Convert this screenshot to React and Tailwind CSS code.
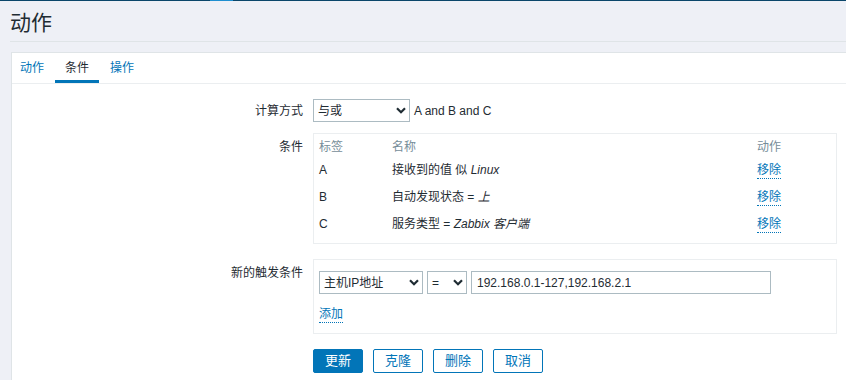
import React from 'react';

const Chevron = () => (
    <svg width="10" height="7" viewBox="0 0 10 7" className="shrink-0">
        <polyline points="1,1.2 5,5.2 9,1.2" fill="none" stroke="#1f2c33" strokeWidth="2.2" />
    </svg>
);

const Select = ({ value, width }) => (
    <div className={`flex items-center justify-between h-[23px] border border-[#acbbc2] bg-white pl-[4px] pr-[3px] ${width}`}>
        <span>{value}</span>
        <Chevron />
    </div>
);

const conditions = [
    { label: 'A', text: '接收到的值 似 ', em: 'Linux' },
    { label: 'B', text: '自动发现状态 = ', em: '上' },
    { label: 'C', text: '服务类型 = ', em: 'Zabbix 客户端' },
];

const LinkText = ({ children }) => (
    <span className="text-[#0275b8] border-b border-dotted border-[#0275b8] leading-[15px] inline-block">
        {children}
    </span>
);

const App = () => {
    return (
        <div className="min-h-screen bg-[#eef0f6] font-['Liberation_Sans','Noto_Sans_CJK_SC',sans-serif] text-[12px] text-[#1f2c33] overflow-hidden">
            <div className="h-px bg-[#0a466a] flex">
                <div className="ml-[210px] w-[23px] bg-[#1f8fd0]" />
            </div>

            <div className="ml-[10px] h-[41px] border-b border-[#dfe4e7] pt-[10px]">
                <h1 className="text-[21px] leading-[24px]">动作</h1>
            </div>

            <div className="mt-[10px] ml-[11px] bg-white border-l border-t border-[#dfe4e7] min-h-[330px]">
                <div className="flex h-[31px] border-b border-[#ebeef0]">
                    <div className="pl-[8px] pr-[11px] flex items-center text-[#0275b8]">动作</div>
                    <div className="px-[10px] flex items-center border-b-[3px] border-[#0275b8] pt-[3px]">条件</div>
                    <div className="pl-[11px] pr-[10px] flex items-center text-[#0275b8]">操作</div>
                </div>

                <div className="pt-[15px] grid grid-cols-[291px_524px] gap-x-[10px]">
                    <div className="text-right flex items-center justify-end h-[23px]">计算方式</div>
                    <div className="flex items-center gap-[4px] h-[23px]">
                        <Select value="与或" width="w-[97px]" />
                        <span>A and B and C</span>
                    </div>

                    <div className="text-right mt-[11px] pt-[6px] leading-[16px]">条件</div>
                    <div className="mt-[11px] border border-[#ebeef0] px-[5px] pt-[4px] pb-[6px]">
                        <div className="grid grid-cols-[73px_1fr_74px] h-[18px] items-center text-[#768d99]">
                            <span>标签</span>
                            <span>名称</span>
                            <span>动作</span>
                        </div>
                        {conditions.map((c) => (
                            <div key={c.label} className="grid grid-cols-[73px_1fr_74px] h-[27px] items-center">
                                <span>{c.label}</span>
                                <span>
                                    {c.text}
                                    <em>{c.em}</em>
                                </span>
                                <span>
                                    <LinkText>移除</LinkText>
                                </span>
                            </div>
                        ))}
                    </div>

                    <div className="text-right mt-[15px] pt-[6px] leading-[16px]">新的触发条件</div>
                    <div className="mt-[15px] border border-[#ebeef0] pl-[5px] pt-[11px] pb-[10px]">
                        <div className="flex gap-[4px]">
                            <Select value="主机IP地址" width="w-[104px]" />
                            <Select value="=" width="w-[40px]" />
                            <div className="h-[23px] w-[300px] border border-[#acbbc2] flex items-center pl-[5px]">
                                192.168.0.1-127,192.168.2.1
                            </div>
                        </div>
                        <div className="mt-[11px]">
                            <LinkText>添加</LinkText>
                        </div>
                    </div>

                    <div />
                    <div className="mt-[15px] flex gap-[10px] text-[13px]">
                        <button className="w-[50px] h-[24px] rounded-[2px] bg-[#0275b8] border border-[#0275b8] text-white">更新</button>
                        <button className="w-[50px] h-[24px] rounded-[2px] bg-white border border-[#0275b8] text-[#0275b8]">克隆</button>
                        <button className="w-[50px] h-[24px] rounded-[2px] bg-white border border-[#0275b8] text-[#0275b8]">删除</button>
                        <button className="w-[50px] h-[24px] rounded-[2px] bg-white border border-[#0275b8] text-[#0275b8]">取消</button>
                    </div>
                </div>
            </div>
        </div>
    );
};

export default App;
